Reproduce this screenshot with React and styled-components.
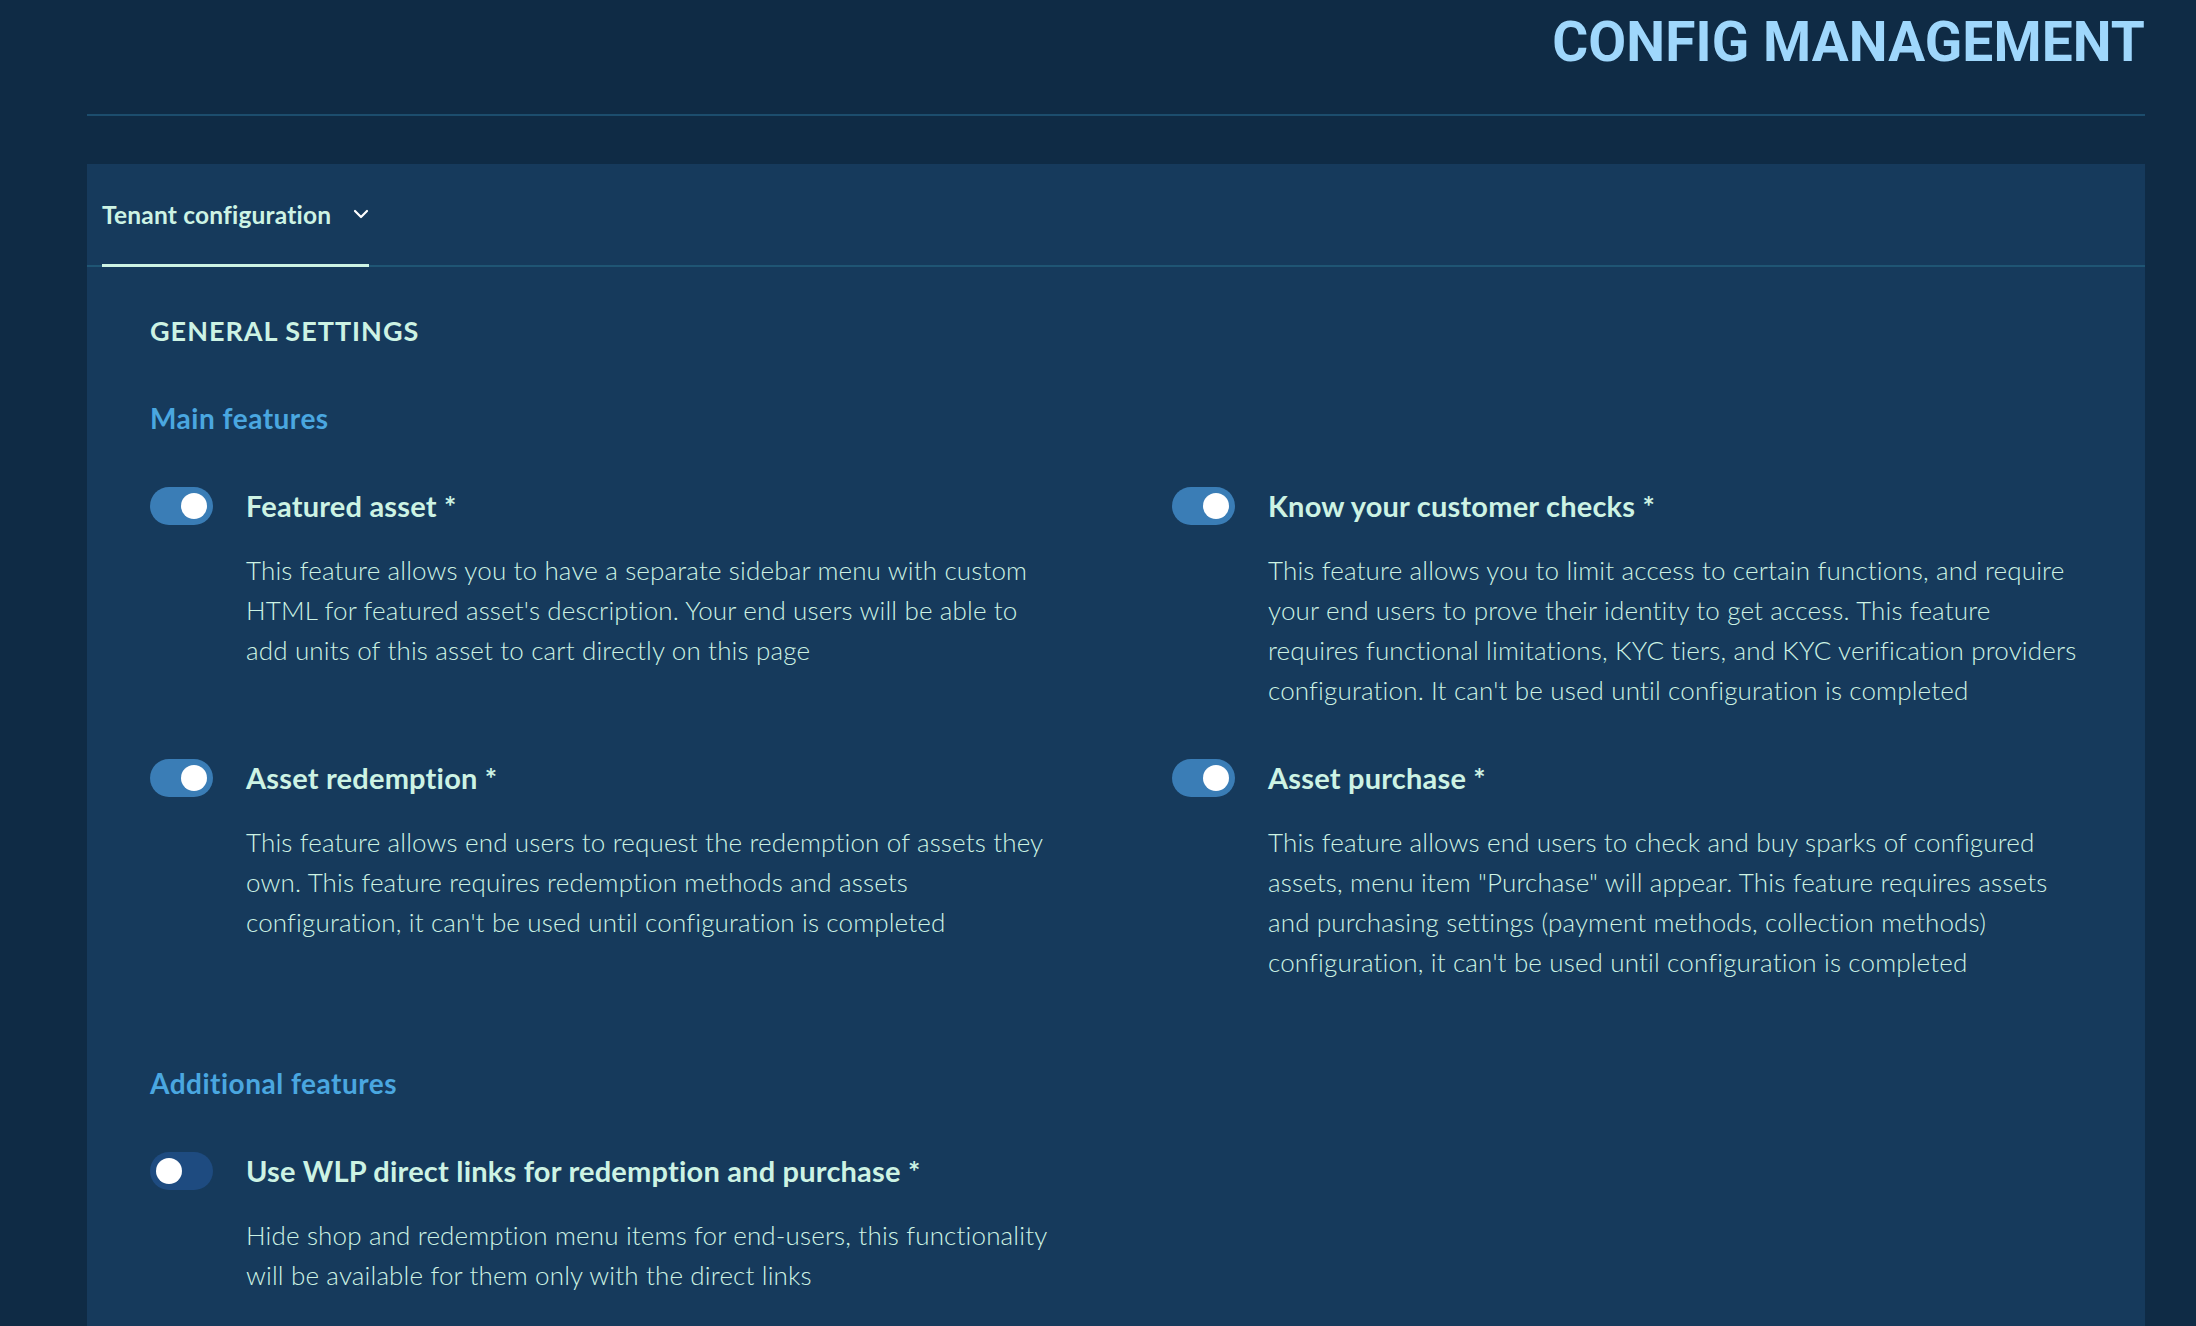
import React, { useState } from 'react';
import styled, { createGlobalStyle } from 'styled-components';

const GlobalStyle = createGlobalStyle`
  html, body {
    margin: 0;
    padding: 0;
    background-color: #0f2b45;
  }

  body {
    font-family: Lato, "Noto Sans", sans-serif;
    color: #cdf3e4;
  }
`;

const Page = styled.div`
  min-height: 100vh;
  padding: 0 51px 0 87px;
  background-color: #0f2b45;
  box-sizing: border-box;
`;

const Header = styled.header`
  height: 116px;
  display: flex;
  justify-content: flex-end;
  align-items: flex-start;
  border-bottom: 2px solid #1c4d6d;
  box-sizing: border-box;
`;

const PageTitle = styled.h1`
  margin: 12px 0 0 0;
  font-family: Roboto, "Liberation Sans", sans-serif;
  font-size: 55px;
  line-height: 60px;
  font-weight: 700;
  color: #9fd7fc;
  letter-spacing: 0.1px;
`;

const Card = styled.section`
  margin-top: 48px;
  background-color: #163a5c;
  min-height: 1200px;
`;

const TabBar = styled.nav`
  height: 103px;
  padding: 0 15px;
  display: flex;
  align-items: stretch;
  border-bottom: 2px solid #1f5574;
  box-sizing: border-box;
`;

const Tab = styled.button`
  display: flex;
  align-items: center;
  gap: 22px;
  padding: 0;
  margin-bottom: -2px;
  background: none;
  border: 0;
  border-bottom: 3px solid ${({ active }) => (active ? '#cdf3e4' : 'transparent')};
  font-family: Lato, "Noto Sans", sans-serif;
  font-size: 24.5px;
  font-weight: 700;
  letter-spacing: 0.2px;
  color: #cdf3e4;
  cursor: pointer;
`;

const Content = styled.div`
  padding: 46px 63px 40px 63px;
`;

const SectionTitle = styled.h2`
  margin: 0;
  font-size: 27px;
  line-height: 36px;
  font-weight: 700;
  letter-spacing: 1px;
  color: #cdf3e4;
`;

const GroupTitle = styled.h3`
  margin: ${({ first }) => (first ? '51px' : '83px')} 0 50px 0;
  font-size: 28px;
  line-height: 36px;
  font-weight: 700;
  letter-spacing: 0.5px;
  color: #4aa7e0;
`;

const FeatureGrid = styled.div`
  display: grid;
  grid-template-columns: 910px 910px;
  column-gap: 112px;
  row-gap: 48px;
`;

const Feature = styled.div`
  display: grid;
  grid-template-columns: 63px 1fr;
  column-gap: 33px;
  align-items: start;
`;

const Track = styled.button`
  position: relative;
  width: 63px;
  height: 38px;
  margin-top: 1px;
  padding: 0;
  border: 0;
  border-radius: 19px;
  background-color: ${({ on }) => (on ? '#3a7db6' : '#1e4b80')};
  cursor: pointer;
`;

const Knob = styled.span`
  position: absolute;
  top: 6px;
  left: ${({ on }) => (on ? '31px' : '6px')};
  width: 26px;
  height: 26px;
  border-radius: 50%;
  background-color: #ffffff;
`;

const FeatureTitle = styled.div`
  font-size: 29px;
  line-height: 40px;
  font-weight: 700;
  letter-spacing: 0.2px;
  color: #cdf3e4;
`;

const FeatureText = styled.p`
  margin: 24px 0 0 0;
  font-size: 26px;
  line-height: 40px;
  font-weight: 300;
  letter-spacing: 0.15px;
  color: #cdf3e4;
`;

const Chevron = () => (
  <svg width="16" height="10" viewBox="0 0 16 10" fill="none">
    <path d="M2 2l6 6 6-6" stroke="#ffffff" strokeWidth="2.2" strokeLinecap="round" strokeLinejoin="round" />
  </svg>
);

const Toggle = ({ defaultOn }) => {
  const [on, setOn] = useState(defaultOn);
  return (
    <Track on={on ? 1 : 0} onClick={() => setOn(!on)}>
      <Knob on={on ? 1 : 0} />
    </Track>
  );
};

const FeatureItem = ({ title, text, on }) => (
  <Feature>
    <Toggle defaultOn={on} />
    <div>
      <FeatureTitle>{title}</FeatureTitle>
      <FeatureText>{text}</FeatureText>
    </div>
  </Feature>
);

const mainFeatures = [
  {
    title: 'Featured asset *',
    text: "This feature allows you to have a separate sidebar menu with custom HTML for featured asset's description. Your end users will be able to add units of this asset to cart directly on this page",
    on: true,
  },
  {
    title: 'Know your customer checks *',
    text: "This feature allows you to limit access to certain functions, and require your end users to prove their identity to get access. This feature requires functional limitations, KYC tiers, and KYC verification providers configuration. It can't be used until configuration is completed",
    on: true,
  },
  {
    title: 'Asset redemption *',
    text: "This feature allows end users to request the redemption of assets they own. This feature requires redemption methods and assets configuration, it can't be used until configuration is completed",
    on: true,
  },
  {
    title: 'Asset purchase *',
    text: 'This feature allows end users to check and buy sparks of configured assets, menu item "Purchase" will appear. This feature requires assets and purchasing settings (payment methods, collection methods) configuration, it can\'t be used until configuration is completed',
    on: true,
  },
];

const additionalFeatures = [
  {
    title: 'Use WLP direct links for redemption and purchase *',
    text: 'Hide shop and redemption menu items for end-users, this functionality will be available for them only with the direct links',
    on: false,
  },
];

const App = () => {
  return (
    <>
      <GlobalStyle />
      <Page>
        <Header>
          <PageTitle>CONFIG MANAGEMENT</PageTitle>
        </Header>
        <Card>
          <TabBar>
            <Tab active>
              Tenant configuration
              <Chevron />
            </Tab>
          </TabBar>
          <Content>
            <SectionTitle>GENERAL SETTINGS</SectionTitle>
            <GroupTitle first>Main features</GroupTitle>
            <FeatureGrid>
              {mainFeatures.map((f) => (
                <FeatureItem key={f.title} {...f} />
              ))}
            </FeatureGrid>
            <GroupTitle>Additional features</GroupTitle>
            <FeatureGrid>
              {additionalFeatures.map((f) => (
                <FeatureItem key={f.title} {...f} />
              ))}
            </FeatureGrid>
          </Content>
        </Card>
      </Page>
    </>
  );
};

export default App;
